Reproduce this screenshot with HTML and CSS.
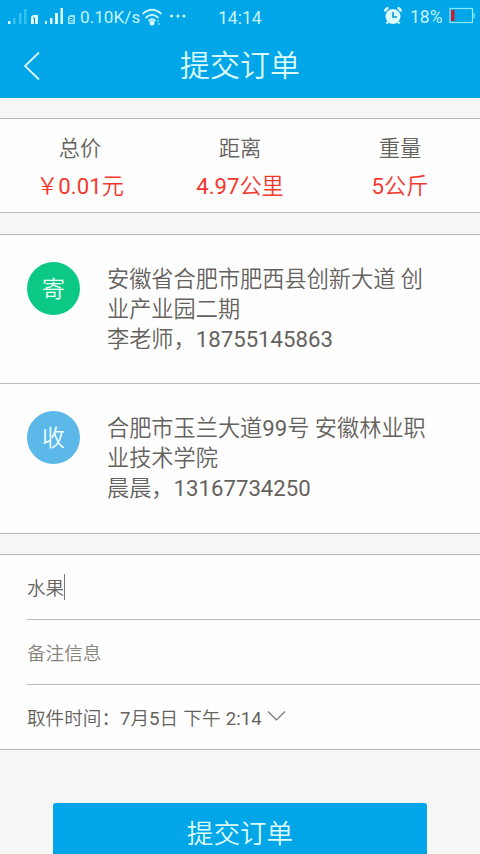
FILE: index.html
```html
<!DOCTYPE html>
<html lang="zh-CN">
<head>
<meta charset="utf-8">
<title>提交订单</title>
<link rel="stylesheet" href="styles.css">
</head>
<body>
<header class="top">
  <div class="status">
    <svg class="signals" width="80" height="30" viewBox="0 0 80 30">
      <rect class="on" x="8" y="21" width="2.5" height="3"/>
      <g class="dim"><rect x="13" y="18" width="2.5" height="6"/><rect x="19" y="13" width="2.5" height="11"/><rect x="24" y="9" width="2.5" height="15"/></g>
      <path class="on" d="M31 24V17L33 15H38V24Z"/>
      <path class="slot" d="M33 18H34.500V24"/>
      <g class="on"><rect x="45" y="21" width="2" height="3"/><rect x="50" y="18" width="2.5" height="6"/><rect x="55" y="13" width="3" height="11"/><rect x="60.500" y="8" width="2.500" height="16"/></g>
      <path class="sim" d="M68 24V17L70 15H75V24Z"/>
      <path class="slot" d="M69.500 17.500H73V19.500H70V22H73.500"/>
    </svg>
    <span class="speed">0.10K/s</span>
    <svg class="wifi" width="22" height="20" viewBox="0 0 22 20">
      <path d="M1.500 6Q11 -2.500 20.500 6M4.500 10Q11 3.500 17.500 10M7.500 13Q11 9.500 14.500 13"/>
      <circle class="on" cx="11" cy="15" r="2.500"/>
      <path class="traffic" d="M17 12V14M18 15V17"/>
    </svg>
    <svg class="more" width="18" height="4" viewBox="0 0 18 4"><circle cx="2.500" cy="2" r="1.500"/><circle cx="9" cy="2" r="1.500"/><circle cx="15" cy="2" r="1.500"/></svg>
    <span class="clock">14:14</span>
    <svg class="alarm" width="20" height="20" viewBox="0 0 20 20">
      <circle cx="10" cy="10.500" r="7.500"/>
      <path class="bells" d="M2 5.500Q2.500 2.500 5.500 2M14.500 2Q17.500 2.500 18 5.500M5 16L3.500 17.500M15 16L16.500 17.500"/>
      <path class="hands" d="M10 6V11H14"/>
    </svg>
    <span class="percent">18%</span>
    <svg class="battery" width="27" height="18" viewBox="0 0 27 18">
      <rect class="shell" x="1" y="1.500" width="22.500" height="14"/>
      <path class="shell" d="M25 6V11"/>
      <rect class="charge" x="2" y="3" width="3.500" height="11"/>
    </svg>
  </div>
  <div class="nav">
    <svg class="back" width="20" height="32" viewBox="0 0 20 32"><path d="M17 2.500L3 16L17 29.500"/></svg>
    <h1 class="title">提交订单</h1>
  </div>
</header>
<main>
  <section class="panel summary">
    <div class="stat"><span class="label">总价</span><span class="value">￥<b>0.01</b>元</span></div>
    <div class="stat"><span class="label">距离</span><span class="value"><b>4.97</b>公里</span></div>
    <div class="stat"><span class="label">重量</span><span class="value"><b>5</b>公斤</span></div>
  </section>
  <section class="panel addresses">
    <div class="address">
      <span class="badge sender">寄</span>
      <p class="detail">安徽省合肥市肥西县创新大道 创<br>业产业园二期<br>李老师，<b>18755145863</b></p>
    </div>
    <div class="address">
      <span class="badge receiver">收</span>
      <p class="detail">合肥市玉兰大道<b>99</b>号 安徽林业职<br>业技术学院<br>晨晨，<b>13167734250</b></p>
    </div>
  </section>
  <section class="panel form">
    <div class="field">水果<i class="caret"></i></div>
    <div class="field hint">备注信息</div>
    <div class="field time"><span>取件时间：<b>7</b>月<b>5</b>日 下午 <b>2:14</b></span><svg class="down" width="20" height="12" viewBox="0 0 20 12"><path d="M1 1.500L9.500 10L18 1.500"/></svg></div>
  </section>
  <button class="submit">提交订单</button>
</main>
</body>
</html>
```
FILE: styles.css
```css
* { box-sizing: border-box; }
body {
  margin: 0;
  width: 480px;
  height: 854px;
  overflow: hidden;
  background: #f6f6f5;
  color: #65625d;
  font-family: Roboto, "Noto Sans CJK SC", sans-serif;
  font-weight: 350;
}
b { font-weight: 400; }
svg { display: block; flex: none; fill: none; }
.top { height: 98px; background: #00a6e7; color: #dcfbff; }
.status { display: flex; align-items: flex-start; height: 34px; font-size: 17.5px; font-weight: 400; line-height: 35px; white-space: nowrap; color: #c4f3fd; }
.on { fill: #d8fbff; stroke: none; }
.dim { fill: #35c3f0; }
.sim { fill: #9de6fb; }
.slot { stroke: #0096d5; stroke-width: 1; }
.speed { width: 60px; font-size: 17.2px; }
.wifi { margin: 8px 0 0 1px; stroke: #c9f8ff; stroke-width: 1.8; }
.wifi .traffic { stroke: #55d5f4; }
.more { margin: 14px 0 0 6px; fill: #d8fbff; }
.clock { width: 44px; margin-left: 31px; line-height: 37px; }
.alarm { margin: 6px 0 0 121px; fill: #dcfbff; }
.bells { stroke: #dcfbff; stroke-width: 2.4; }
.hands { stroke: #0799d2; stroke-width: 1.6; }
.percent { width: 37px; margin-left: 7px; line-height: 34px; }
.battery { margin: 7px 0 0 2px; }
.shell { stroke: #8beafa; stroke-width: 1.2; }
.charge { fill: #c91f35; }
.nav { display: grid; grid-template-columns: 60px 1fr 60px; align-items: center; height: 64px; }
.back { margin: -1px 0 0 22px; stroke: #dcfbff; stroke-width: 1.8; }
.title { margin: 0; text-align: center; font-size: 30px; font-weight: inherit; line-height: 64px; }
.panel { background: #fefefe; border: solid #bababa; border-width: 1px 0; }
.summary { display: grid; grid-template-columns: repeat(3, 1fr); height: 95px; margin-top: 20px; padding-top: 11px; }
.stat { display: flex; flex-direction: column; align-items: center; }
.label { font-size: 21.3px; line-height: 38px; }
.value { font-size: 22.2px; line-height: 36px; color: #f5382f; }
.addresses { margin-top: 21px; height: 300px; }
.address { display: flex; height: 148px; padding: 27px 0 0 27px; }
.address + .address { height: 150px; border-top: 1px solid #bababa; }
.badge { flex: none; width: 53px; height: 53px; border-radius: 50%; color: #effffb; font-size: 23px; line-height: 55px; text-align: center; }
.sender { background: #0bc985; }
.receiver { background: #5cb8e9; }
.detail { margin: 2px 0 0 27px; font-size: 22.2px; line-height: 30px; white-space: nowrap; }
.form { margin-top: 20px; height: 196px; padding-left: 27px; }
.field { display: flex; align-items: center; height: 64px; padding-bottom: 1px; font-size: 18.6px; }
.field + .field { height: 65px; padding-bottom: 2px; border-top: 1px solid #bababa; }
.hint { color: #85827c; }
.time { word-spacing: 0.7px; }
.caret { width: 1px; height: 26px; background: #77746f; }
.down { margin-left: 5px; stroke: #77746f; stroke-width: 1.2; }
.submit { display: block; width: 374px; height: 62px; margin: 53px auto 0; padding: 0; border: 0; border-radius: 3px; background: #00a6e7; color: #dcfbff; font: inherit; font-size: 26.6px; line-height: 60px; }
```
